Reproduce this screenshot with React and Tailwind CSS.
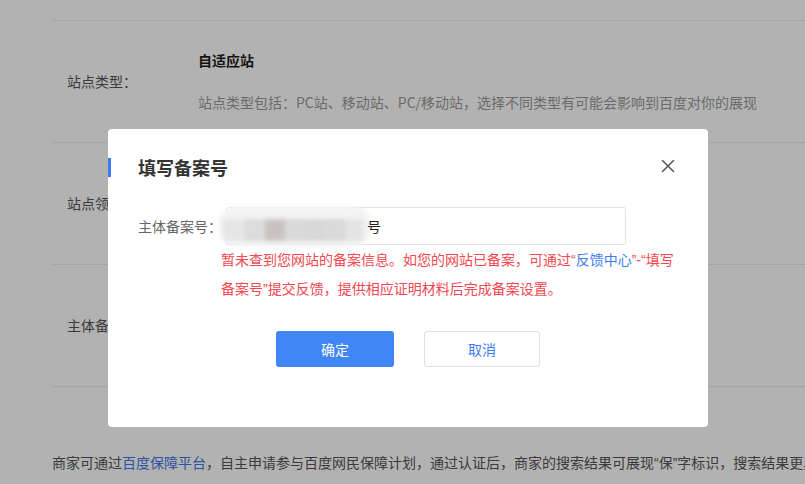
import React from 'react';

const Row = ({ label, children }) => (
  <div className="flex h-[122px] items-center border-t border-[#ececec]">
    <div className="w-[146px] pl-[15px] text-[14px] text-[#555]">{label}</div>
    <div className="flex-1">{children}</div>
  </div>
);

const Q = ({ children }) => <span className="font-[Liberation_Sans,sans-serif]">{children}</span>;

const BlurredValue = () => (
  <div className="pointer-events-none absolute left-[-8px] top-[-2px] h-[40px] w-[152px] rounded-[18px] bg-[#f3f3f3] blur-[2px]">
    <div className="mt-[13px] flex h-[22px] pl-[4px]">
      <div className="w-[22px] bg-[#e6e6e6]" />
      <div className="w-[20px] bg-[#dcdcdc]" />
      <div className="w-[20px] bg-[#c9c4c1]" />
      <div className="w-[20px] bg-[#dadada]" />
      <div className="w-[20px] bg-[#d8d8d8]" />
      <div className="w-[20px] bg-[#dadada]" />
      <div className="w-[18px] bg-[#e4e4e4]" />
    </div>
  </div>
);

export default function App() {
  return (
    <div className="relative h-[484px] w-[805px] overflow-hidden bg-white font-[Noto_Sans_CJK_SC,sans-serif]">
      {/* page behind the mask */}
      <div className="pt-[20px] pl-[52px]">
        <Row label="站点类型：">
          <div className="-mt-[2px] text-[14px] font-bold leading-[20px] text-[#1a1a1a]">自适应站</div>
          <div className="mt-[22px] whitespace-nowrap text-[14px] leading-[20px] text-[#9a9a9a]">
            站点类型包括：PC站、移动站、PC/移动站，选择不同类型有可能会影响到百度对你的展现
          </div>
        </Row>
        <Row label="站点领域：">
          <div className="text-[14px] text-[#333]">IT/互联网</div>
        </Row>
        <Row label="主体备案号：">
          <div className="text-[14px] text-[#333]">未备案</div>
        </Row>
        <div className="border-t border-[#ececec] pt-[65px] whitespace-nowrap text-[14px] leading-[20px] text-[#555]">
          商家可通过<span className="text-[#3e78e6]">百度保障平台</span>，自主申请参与百度网民保障计划，通过认证后，商家的搜索结果可展现<Q>“</Q>保<Q>”</Q>字标识，搜索结果更具公信力
        </div>
      </div>

      {/* mask */}
      <div className="absolute inset-0 bg-black/30" />

      {/* dialog */}
      <div className="absolute left-[108px] top-[129px] h-[298px] w-[600px] rounded-[4px] bg-white">
        <div className="mt-[29px] flex h-[19px] items-center justify-between border-l-[3px] border-[#3d7cf6] pl-[27px] pr-[33px]">
          <span className="text-[18px] font-bold leading-[19px] text-[#333]">填写备案号</span>
          <svg width="14" height="14" viewBox="0 0 14 14" className="-mt-[4px]">
            <path d="M1.5 1.5L12.5 12.5M12.5 1.5L1.5 12.5" stroke="#555" strokeWidth="1.5" strokeLinecap="round" />
          </svg>
        </div>

        <div className="mt-[30px] flex items-center pl-[30px]">
          <span className="w-[88px] text-[14px] text-[#666]">主体备案号：</span>
          <div className="relative h-[38px] w-[400px] rounded-[2px] border border-[#e3e3e3]">
            <BlurredValue />
            <span className="absolute left-[140px] top-[8px] text-[14px] leading-[20px] text-[#222]">号</span>
          </div>
        </div>

        <p className="ml-[113px] w-[464px] text-[14px] leading-[28px] text-[#f5474f]">
          暂未查到您网站的备案信息。如您的网站已备案，可通过<Q>“</Q><span className="text-[#3d7cf6]">反馈中心</span><Q>”-“</Q>填写<wbr />备案号<Q>”</Q>提交反馈，提供相应证明材料后完成备案设置。
        </p>

        <div className="mt-[28px] flex justify-center gap-[30px]">
          <button className="h-[36px] w-[118px] rounded-[3px] bg-[#4086f6] text-[14px] text-white">确定</button>
          <button className="h-[36px] w-[116px] rounded-[3px] border border-[#e0e0e0] bg-white text-[14px] text-[#3d7cf6]">取消</button>
        </div>
      </div>
    </div>
  );
}
